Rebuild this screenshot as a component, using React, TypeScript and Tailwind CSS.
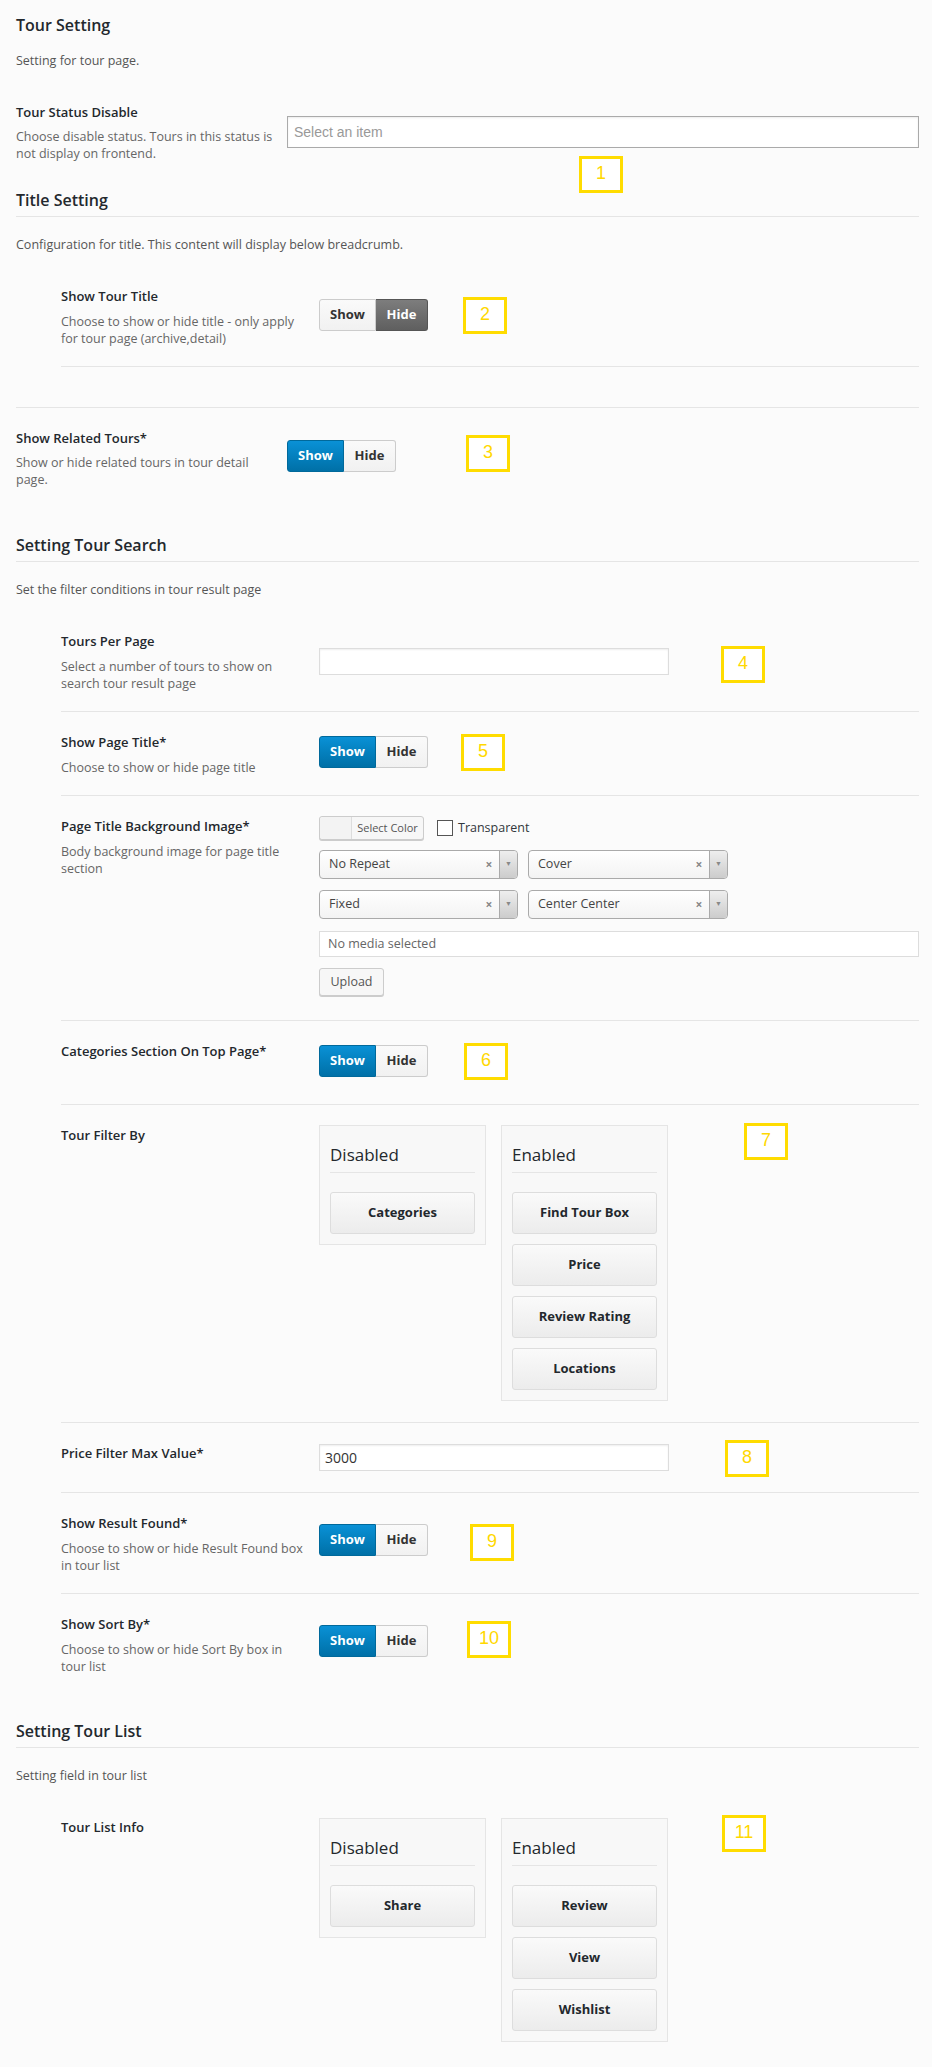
import type { FC, ReactNode } from "react";
import clsx from "clsx";

interface RowProps {
  title: string;
  desc?: string[];
  wide?: boolean;
  last?: boolean;
  ctrlClass?: string;
  children?: ReactNode;
}

const Row: FC<RowProps> = ({ title, desc = [], wide, last, ctrlClass, children }) => (
  <div className={clsx("flex items-start pt-[22px] pb-[19px]", !last && "border-b border-[#e5e5e5]")}>
    <div className={wide ? "w-[271px] shrink-0" : "w-[258px] shrink-0"}>
      <div className="text-[13px] leading-[17px] font-semibold text-[#23282d] whitespace-nowrap">{title}</div>
      {desc.length > 0 && (
        <div className={clsx("text-[12.5px] leading-[17px] text-[#666]", wide ? "mt-[7px]" : "mt-[8px]")}>
          {desc.map((l) => (
            <div key={l} className="whitespace-nowrap">{l}</div>
          ))}
        </div>
      )}
    </div>
    <div className={ctrlClass}>{children}</div>
  </div>
);

const Toggle: FC<{ active: "show" | "hide" }> = ({ active }) => (
  <div className="flex h-[32px] text-[13px] font-bold">
    <span
      className={clsx(
        "w-[57px] flex items-center justify-center rounded-l-[3px] border",
        active === "show"
          ? "border-[#00699b] bg-linear-to-b from-[#0a91d6] to-[#0070a7] text-white"
          : "border-[#ccc] bg-linear-to-b from-[#fafafa] to-[#f1f1f1] text-[#333]"
      )}
    >
      Show
    </span>
    <span
      className={clsx(
        "w-[52px] flex items-center justify-center rounded-r-[3px] border border-l-0",
        active === "hide"
          ? "border-[#555] bg-linear-to-b from-[#7d7d7d] to-[#5f5f5f] text-white"
          : "border-[#ccc] bg-linear-to-b from-[#fafafa] to-[#f1f1f1] text-[#333]"
      )}
    >
      Hide
    </span>
  </div>
);

const SectionHead: FC<{ className?: string; children: ReactNode }> = ({ className, children }) => (
  <h2 className={clsx("text-[16px] leading-[22px] font-semibold text-[#23282d] pb-[5px] border-b border-[#e5e5e5]", className)}>
    {children}
  </h2>
);

const Note: FC<{ children: ReactNode }> = ({ children }) => (
  <p className="mt-[19px] text-[12.5px] leading-[17px] text-[#555]">{children}</p>
);

const TextInput: FC<{ value?: string }> = ({ value }) => (
  <div className="w-[350px] h-[27px] border border-[#ddd] bg-white shadow-[inset_0_1px_2px_rgba(0,0,0,0.07)] pl-[5px] flex items-center text-[14px] text-[#333]">
    {value}
  </div>
);

const Select2: FC<{ value: string; w: string }> = ({ value, w }) => (
  <div className={clsx("h-[29px] flex rounded-[4px] border border-[#aaa] bg-linear-to-b from-white to-[#f3f3f3] text-[12.5px] text-[#444]", w)}>
    <span className="flex-1 pl-[9px] flex items-center">{value}</span>
    <span className="w-[20px] flex items-center justify-center text-[#888] text-[12px] font-bold">×</span>
    <span className="w-[18px] border-l border-[#aaa] rounded-r-[4px] bg-linear-to-b from-[#eee] to-[#ccc] flex items-center justify-center text-[7px] text-[#888]">
      ▼
    </span>
  </div>
);

const SortBox: FC<{ title: string; items: string[] }> = ({ title, items }) => (
  <div className="w-[167px] border border-[#e5e5e5] bg-[#f8f8f8] px-[10px] pt-[18px] pb-[10px]">
    <div className="text-[17px] leading-[22px] font-medium pb-[6px] border-b border-[#e5e5e5] text-[#23282d]">{title}</div>
    <div className="mt-[19px] flex flex-col gap-[10px]">
      {items.map((i) => (
        <div
          key={i}
          className="h-[42px] rounded-[3px] border border-[#ddd] bg-linear-to-b from-[#fafafa] to-[#ececec] flex items-center justify-center text-[13px] font-bold text-[#23282d]"
        >
          {i}
        </div>
      ))}
    </div>
  </div>
);

const badges: [string, string][] = [
  ["1", "left-[579px] top-[156px]"],
  ["2", "left-[463px] top-[297px]"],
  ["3", "left-[466px] top-[435px]"],
  ["4", "left-[721px] top-[646px]"],
  ["5", "left-[461px] top-[734px]"],
  ["6", "left-[464px] top-[1043px]"],
  ["7", "left-[744px] top-[1123px]"],
  ["8", "left-[725px] top-[1440px]"],
  ["9", "left-[470px] top-[1524px]"],
  ["10", "left-[467px] top-[1621px]"],
  ["11", "left-[722px] top-[1815px]"],
];

export default function App() {
  return (
    <div className="relative min-h-[2067px] w-full bg-[#fbfbfb] text-[#23282d] font-['Open_Sans','Noto_Sans',sans-serif]">
      <div className="ml-[16px] w-[903px] pt-[14px]">
        <h2 className="text-[16px] leading-[22px] font-semibold">Tour Setting</h2>
        <p className="mt-[16px] text-[12.5px] leading-[17px] text-[#555]">Setting for tour page.</p>

        <div className="mt-[13px]">
          <Row
            wide
            last
            title="Tour Status Disable"
            desc={["Choose disable status. Tours in this status is", "not display on frontend."]}
            ctrlClass="mt-[12px] flex-1"
          >
            <div className="h-[32px] border border-[#aaa] bg-white shadow-[inset_0_1px_2px_rgba(0,0,0,0.08)] pl-[6px] flex items-center text-[14px] text-[#999] font-['Liberation_Sans',sans-serif]">
              Select an item
            </div>
          </Row>
        </div>

        <SectionHead className="mt-[8px]">Title Setting</SectionHead>
        <Note>Configuration for title. This content will display below breadcrumb.</Note>
        <div className="mt-[13px] pb-[40px] border-b border-[#e5e5e5]">
          <div className="ml-[45px]">
            <Row
              title="Show Tour Title"
              desc={["Choose to show or hide title - only apply", "for tour page (archive,detail)"]}
              ctrlClass="mt-[11px]"
            >
              <Toggle active="hide" />
            </Row>
          </div>
        </div>
        <Row
          wide
          last
          title="Show Related Tours*"
          desc={["Show or hide related tours in tour detail", "page."]}
          ctrlClass="mt-[10px]"
        >
          <Toggle active="show" />
        </Row>

        <SectionHead className="mt-[27px]">Setting Tour Search</SectionHead>
        <Note>Set the filter conditions in tour result page</Note>
        <div className="mt-[13px] ml-[45px]">
          <Row
            title="Tours Per Page"
            desc={["Select a number of tours to show on", "search tour result page"]}
            ctrlClass="mt-[15px]"
          >
            <TextInput />
          </Row>
          <Row title="Show Page Title*" desc={["Choose to show or hide page title"]} ctrlClass="mt-[2px]">
            <Toggle active="show" />
          </Row>
          <Row
            title="Page Title Background Image*"
            desc={["Body background image for page title", "section"]}
            ctrlClass="-mt-[2px] mb-[5px] flex-1"
          >
            <div className="flex items-center">
              <div className="flex h-[24px] w-[105px] rounded-[3px] border border-[#ccc] bg-[#f7f7f7] shadow-[0_1px_0_#ccc]">
                <span className="w-[32px] border-r border-[#ddd] bg-[#f3f3f3] rounded-l-[3px]" />
                <span className="flex-1 flex items-center justify-center text-[11px] text-[#555]">Select Color</span>
              </div>
              <span className="ml-[13px] w-[16px] h-[16px] border border-[#555] bg-white" />
              <span className="ml-[5px] text-[12.5px] text-[#32373c]">Transparent</span>
            </div>
            <div className="mt-[10px] flex gap-[10px]">
              <Select2 value="No Repeat" w="w-[199px]" />
              <Select2 value="Cover" w="w-[200px]" />
            </div>
            <div className="mt-[11px] flex gap-[10px]">
              <Select2 value="Fixed" w="w-[199px]" />
              <Select2 value="Center Center" w="w-[200px]" />
            </div>
            <div className="mt-[12px] h-[26px] border border-[#ddd] bg-white pl-[8px] flex items-center text-[12.5px] text-[#666]">
              No media selected
            </div>
            <div className="mt-[11px] w-[65px] h-[28px] rounded-[3px] border border-[#ccc] bg-[#f7f7f7] shadow-[0_1px_0_#ccc] flex items-center justify-center text-[12.5px] text-[#555]">
              Upload
            </div>
          </Row>
          <Row title="Categories Section On Top Page*" ctrlClass="mt-[2px] mb-[8px]">
            <Toggle active="show" />
          </Row>
          <Row title="Tour Filter By" ctrlClass="-mt-[2px] mb-[2px] flex items-start gap-[15px]">
            <SortBox title="Disabled" items={["Categories"]} />
            <SortBox title="Enabled" items={["Find Tour Box", "Price", "Review Rating", "Locations"]} />
          </Row>
          <Row title="Price Filter Max Value*" ctrlClass="-mt-px mb-[2px]">
            <TextInput value="3000" />
          </Row>
          <Row
            title="Show Result Found*"
            desc={["Choose to show or hide Result Found box", "in tour list"]}
            ctrlClass="mt-[9px]"
          >
            <Toggle active="show" />
          </Row>
          <Row
            last
            title="Show Sort By*"
            desc={["Choose to show or hide Sort By box in", "tour list"]}
            ctrlClass="mt-[9px]"
          >
            <Toggle active="show" />
          </Row>
        </div>

        <SectionHead className="mt-[26px]">Setting Tour List</SectionHead>
        <Note>Setting field in tour list</Note>
        <div className="mt-[13px] ml-[45px]">
          <Row last title="Tour List Info" ctrlClass="-mt-px flex items-start gap-[15px]">
            <SortBox title="Disabled" items={["Share"]} />
            <SortBox title="Enabled" items={["Review", "View", "Wishlist"]} />
          </Row>
        </div>
      </div>

      {badges.map(([n, pos]) => (
        <div
          key={n}
          className={clsx(
            "absolute w-[44px] h-[37px] border-[3px] border-[#ffdc00] bg-white flex items-center justify-center pb-[2px] text-[18px] text-[#ffd800] font-['Liberation_Sans',sans-serif]",
            pos
          )}
        >
          {n}
        </div>
      ))}
    </div>
  );
}
